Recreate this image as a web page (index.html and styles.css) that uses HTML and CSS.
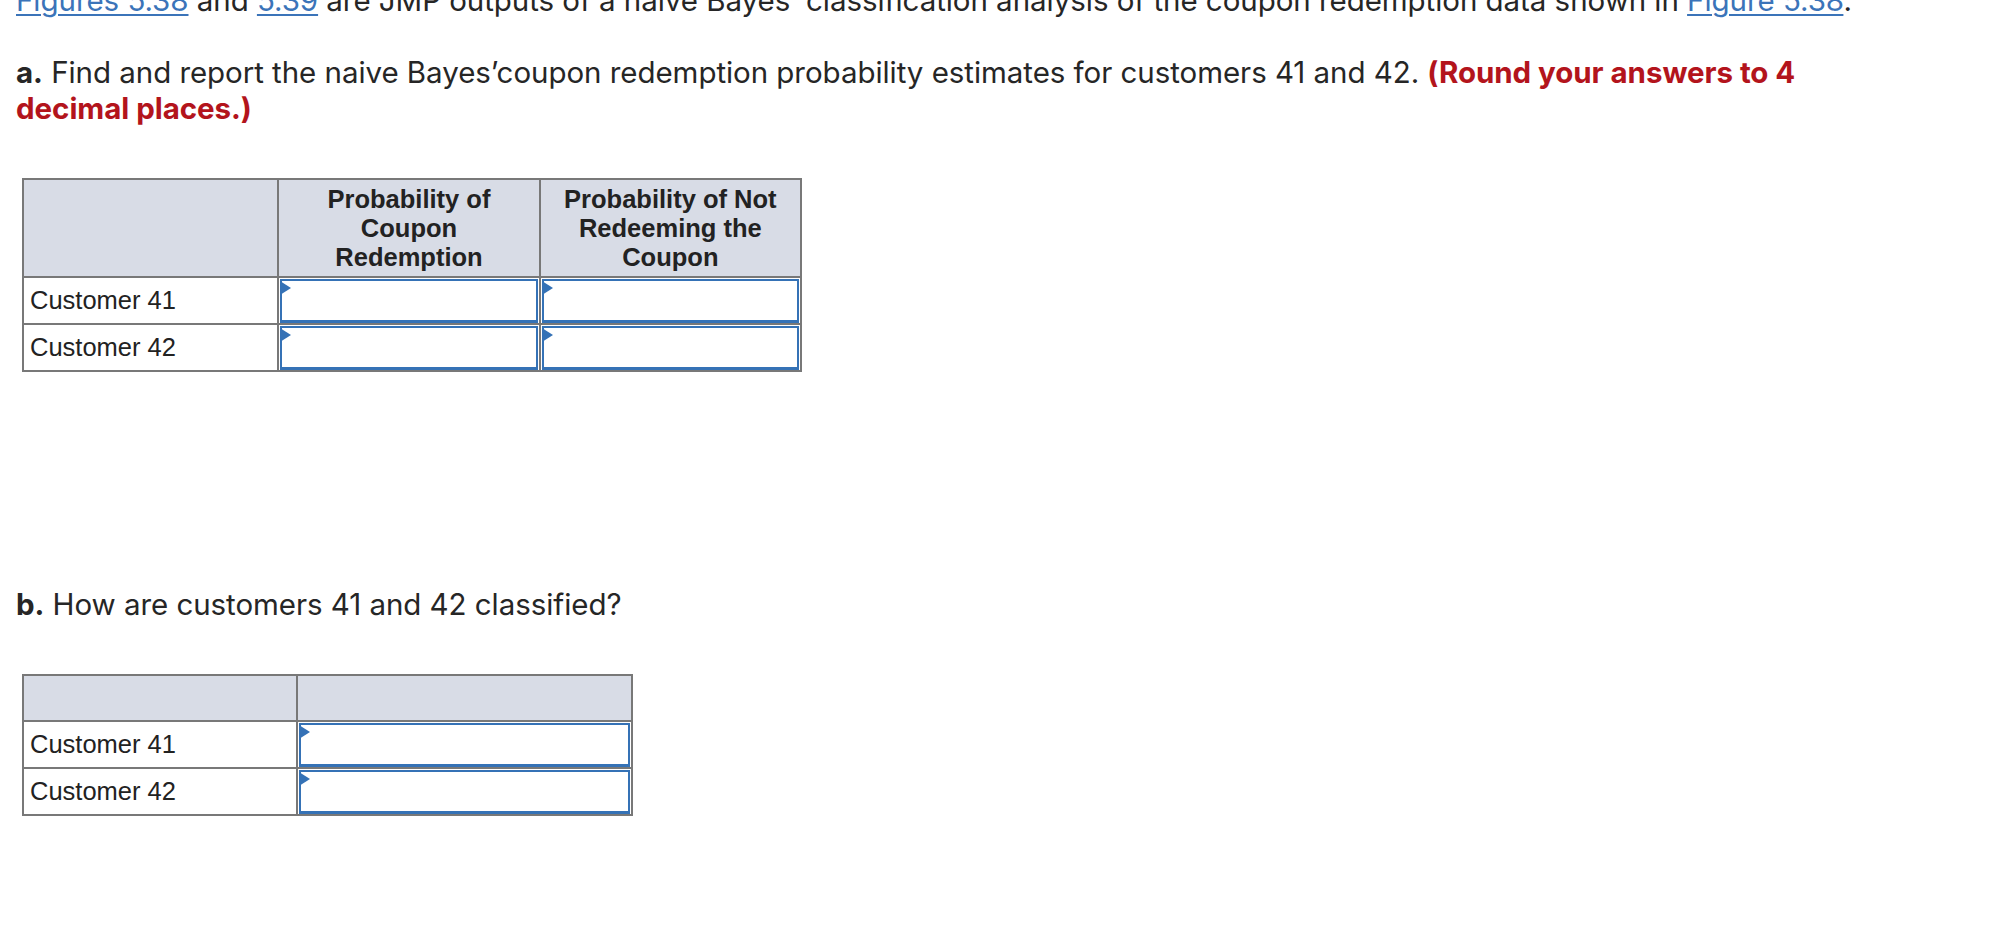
FILE: index.html
```html
<!DOCTYPE html>
<html lang="en">
<head>
<meta charset="utf-8">
<title>Naive Bayes coupon redemption</title>
<link rel="stylesheet" href="styles.css">
</head>
<body>
<main class="page">
  <p class="para intro"><a class="link" href="#">Figures 5.38</a> and <a class="link" href="#">5.39</a> are JMP outputs of a naive Bayes’ classification analysis of the coupon redemption data shown in <a class="link" href="#">Figure 5.38</a>.</p>

  <p class="para part-a"><b class="part">a.</b> Find and report the naive Bayes’coupon redemption probability estimates for customers 41 and 42. <b class="note">(Round your answers to 4 decimal places.)</b></p>

  <table class="grid grid-a">
    <tr class="head">
      <th class="col-label"></th>
      <th class="col-val">Probability of<br>Coupon<br>Redemption</th>
      <th class="col-val">Probability of Not<br>Redeeming the<br>Coupon</th>
    </tr>
    <tr class="row">
      <td class="label">Customer 41</td>
      <td class="entry"><div class="field"><span class="flag"></span></div></td>
      <td class="entry"><div class="field"><span class="flag"></span></div></td>
    </tr>
    <tr class="row">
      <td class="label">Customer 42</td>
      <td class="entry"><div class="field"><span class="flag"></span></div></td>
      <td class="entry"><div class="field"><span class="flag"></span></div></td>
    </tr>
  </table>

  <p class="para part-b"><b class="part">b.</b> How are customers 41 and 42 classified?</p>

  <table class="grid grid-b">
    <tr class="head head-short">
      <th class="col-label-b"></th>
      <th class="col-val-b"></th>
    </tr>
    <tr class="row">
      <td class="label">Customer 41</td>
      <td class="entry"><div class="field"><span class="flag"></span></div></td>
    </tr>
    <tr class="row">
      <td class="label">Customer 42</td>
      <td class="entry"><div class="field"><span class="flag"></span></div></td>
    </tr>
  </table>
</main>
</body>
</html>
```

FILE: styles.css
```css
html, body {
  margin: 0;
  padding: 0;
  background: #ffffff;
}

body {
  font-family: "Inter", "Open Sans", sans-serif;
  color: #262626;
  overflow: hidden;
}

.page {
  margin-top: -18px;
  padding-left: 16px;
  width: 1880px;
}

.para {
  margin: 0;
  font-size: 29.5px;
  line-height: 36px;
  letter-spacing: -0.05px;
}

.intro {
  margin-bottom: 36px;
}

.part-a {
  margin-bottom: 52px;
}

.part-b {
  margin-bottom: 52px;
}

.part {
  font-weight: 700;
  color: #262626;
}

.note {
  font-weight: 700;
  color: #b3141c;
}

.link {
  color: #3b74b9;
  text-decoration: underline;
  text-decoration-thickness: 2px;
  text-underline-offset: 3px;
}

.grid {
  border-collapse: collapse;
  margin-left: 6px;
  font-family: "Liberation Sans", Arial, sans-serif;
  font-size: 25.5px;
  color: #222222;
  border: 2px solid #787878;
}

.grid-a {
  width: 780px;
  margin-bottom: 214px;
}

.grid-b {
  width: 611px;
}

.grid th,
.grid td {
  border: 2px solid #787878;
  padding: 0;
}

.head th {
  background: #d8dce6;
  font-weight: 700;
  text-align: center;
  vertical-align: middle;
  height: 96px;
  line-height: 29px;
}

.head-short th {
  height: 44px;
}

.col-label { width: 254px; }
.col-val { width: 260px; }
.col-label-b { width: 273px; }
.col-val-b { width: 334px; }

.row td {
  height: 44px;
}

.label {
  padding: 0 6px !important;
  text-align: left;
  vertical-align: middle;
  line-height: 29px;
}

.entry {
  padding: 1px 0 0 1px !important;
  vertical-align: top;
}

.field {
  position: relative;
  height: 39px;
  margin-right: 1px;
  border: 2px solid #3572b6;
  border-bottom-width: 3px;
  background: #ffffff;
}

.flag {
  position: absolute;
  left: -2px;
  top: 0;
  width: 0;
  height: 0;
  border-left: 11px solid #3572b6;
  border-top: 7px solid transparent;
  border-bottom: 7px solid transparent;
}
```
